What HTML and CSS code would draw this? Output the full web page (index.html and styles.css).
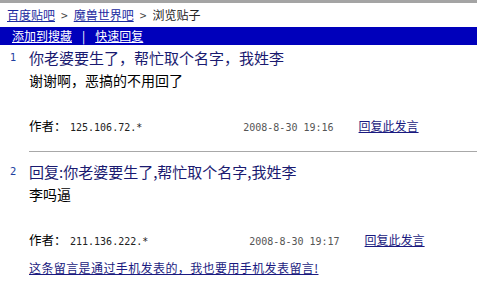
FILE: index.html
```html
<!DOCTYPE html>
<html lang="zh">
<head>
<meta charset="utf-8">
<link rel="stylesheet" href="styles.css">
</head>
<body>
<div class="topline"></div>
<div class="crumbs">
  <a href="#">百度贴吧</a><span class="sep">&gt;</span><a href="#">魔兽世界吧</a><span class="sep">&gt;</span><span>浏览贴子</span>
</div>
<div class="bar">
  <a href="#">添加到搜藏</a><span class="pipe">|</span><a href="#">快速回复</a>
</div>
<div class="post">
  <div class="num">1</div>
  <div class="body">
    <div class="title">你老婆要生了，帮忙取个名字，我姓李</div>
    <div class="text">谢谢啊，恶搞的不用回了</div>
    <div class="meta"><span class="lab">作者：</span><span class="ip">125.106.72.*</span><span class="date">2008-8-30 19:16</span><a href="#" class="reply">回复此发言</a></div>
  </div>
</div>
<div class="divider"></div>
<div class="post second">
  <div class="num">2</div>
  <div class="body">
    <div class="title">回复:你老婆要生了,帮忙取个名字,我姓李</div>
    <div class="text">李吗逼</div>
    <div class="meta"><span class="lab">作者：</span><span class="ip">211.136.222.*</span><span class="date">2008-8-30 19:17</span><a href="#" class="reply">回复此发言</a></div>
    <a href="#" class="phone">这条留言是通过手机发表的，我也要用手机发表留言!</a>
  </div>
</div>
</body>
</html>
```
FILE: styles.css
```css
html, body { margin: 0; padding: 0; background: #fff; }
body { font-family: "Noto Sans CJK SC", "DejaVu Sans", sans-serif; font-size: 12px; color: #000; }
a { color: #1a1a80; }
.topline { height: 3px; background: #a4a4a4; }
.crumbs { height: 24px; line-height: 24px; padding-left: 7px; color: #222; display: flex; }
.crumbs a { color: #1a2aa0; }
.crumbs .sep { margin: 0 6px; color: #444; }
.bar { height: 18px; line-height: 17px; background: #0000bb; padding-left: 12px; display: flex; color: #fff; }
.bar a { color: #fff; }
.bar .pipe { margin: 0 10px; }
.post { display: flex; }
.post.second { padding-top: 7px; }
.num { width: 29px; text-align: left; padding-left: 10px; box-sizing: border-box; font-family: "DejaVu Sans", sans-serif; font-size: 10px; color: #2040a0; padding-top: 7px; }
.body { flex: 1; }
.title { font-size: 15px; line-height: 22px; color: #1a1a70; padding-top: 2px; }
.text { font-size: 14px; line-height: 22px; color: #000; }
.meta { display: flex; align-items: baseline; margin-top: 24px; height: 22px; line-height: 22px; }
.lab { width: 41px; font-size: 12.5px; }
.ip { font-family: "DejaVu Sans Mono", monospace; font-size: 10px; color: #222; margin-right: 101px; }
.date { font-family: "DejaVu Sans Mono", monospace; font-size: 10px; color: #555; margin-right: 25px; }
.reply { font-size: 12px; }
.divider { height: 1px; background: #a8a8a8; margin: 14px 0 0 29px; }
.phone { display: block; font-size: 12px; letter-spacing: 0.4px; margin-top: 8px; }
```
